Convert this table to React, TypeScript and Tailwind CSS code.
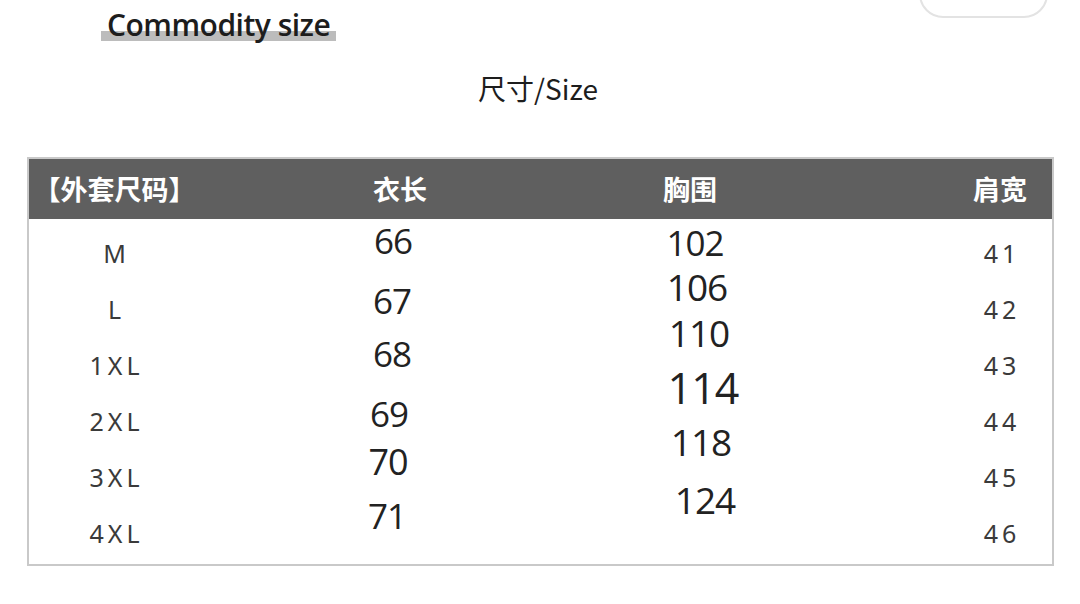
import React from "react";

type Cell = { text: string; cls: string };

// size labels and shoulder widths share the same rhythm
const sizes = ["M", "L", "1XL", "2XL", "3XL", "4XL"];
const shoulders = ["41", "42", "43", "44", "45", "46"];

// the numbers in the source chart are hand placed, so each one keeps its own nudge
const lengths: Cell[] = [
  { text: "66", cls: "mt-[2px] mr-[14px] text-[35px]" },
  { text: "67", cls: "mt-[20px] mr-[16px] text-[35px]" },
  { text: "68", cls: "mt-[13px] mr-[16px] text-[35px]" },
  { text: "69", cls: "mt-[20px] mr-[22px] text-[35px]" },
  { text: "70", cls: "mt-[8px] mr-[24px] text-[36px]" },
  { text: "71", cls: "mt-[14px] mr-[26px] text-[35px]" },
];

const chests: Cell[] = [
  { text: "102", cls: "mt-[4px] ml-[10px] text-[35px]" },
  { text: "106", cls: "mt-[4px] ml-[14px] text-[37px]" },
  { text: "110", cls: "mt-[6px] ml-[18px] text-[37px]" },
  { text: "114", cls: "mt-[15px] ml-[26px] text-[43px]" },
  { text: "118", cls: "mt-[14px] ml-[22px] text-[37px]" },
  { text: "124", cls: "mt-[18px] ml-[30px] text-[37px]" },
];

const headFont = { fontFamily: '"Noto Sans CJK SC", "Noto Sans", sans-serif' };
const numFont = { fontFamily: '"Open Sans", "Noto Sans", sans-serif' };

const LabelColumn: React.FC<{ items: string[] }> = ({ items }) => (
  <div className="flex flex-col items-center pt-[14px] gap-[16px]">
    {items.map((s) => (
      <div
        key={s}
        className="h-[40px] leading-[40px] pl-[4px] text-[25px] tracking-[4px] text-[#3a3a3a]"
        style={{ fontFamily: '"Noto Sans", sans-serif' }}
      >
        {s}
      </div>
    ))}
  </div>
);

const NumberColumn: React.FC<{ items: Cell[] }> = ({ items }) => (
  <div className="flex flex-col items-center">
    {items.map((c) => (
      <div
        key={c.text}
        className={`h-[40px] leading-[40px] tracking-[-1px] text-[#222] ${c.cls}`}
        style={numFont}
      >
        {c.text}
      </div>
    ))}
  </div>
);

export default function App() {
  return (
    <div className="relative w-[1080px] h-[604px] overflow-hidden bg-white">
      {/* card edge peeking in at the top right */}
      <div className="absolute top-[-42px] left-[919px] w-[129px] h-[60px] rounded-[24px] border-2 border-[#e3e3e3]" />

      <div className="flex flex-col">
        <div className="pt-[8px] pl-[101px]">
          <span
            className="inline-block h-[34px] leading-[34px] px-[6px] text-[30px] font-semibold tracking-[-0.5px] text-[#1d1d1d] bg-[linear-gradient(to_bottom,transparent_69%,#bcbcbc_69%,#bcbcbc_98%,transparent_98%)]"
            style={numFont}
          >
            Commodity size
          </span>
        </div>

        <div
          className="mt-[26px] h-[40px] leading-[40px] text-center text-[28px] text-[#1d1d1d] pr-[4px]"
          style={headFont}
        >
          尺寸/Size
        </div>

        <div className="mt-[49px] ml-[27px] w-[1027px] h-[409px] border-2 border-[#c9c9c9] flex flex-col">
          <div
            className="h-[60px] bg-[#5f5f5f] grid grid-cols-[171px_400px_180px_170px_100px] items-center text-white font-bold"
            style={headFont}
          >
            <div className="text-center text-[27px]">【外套尺码】</div>
            <div className="text-center text-[27px]">衣长</div>
            <div className="text-center text-[27px]">胸围</div>
            <div />
            <div className="text-center text-[27px]">肩宽</div>
          </div>

          <div className="flex-1 grid grid-cols-[171px_400px_180px_170px_100px]">
            <LabelColumn items={sizes} />
            <NumberColumn items={lengths} />
            <NumberColumn items={chests} />
            <div />
            <LabelColumn items={shoulders} />
          </div>
        </div>
      </div>
    </div>
  );
}
